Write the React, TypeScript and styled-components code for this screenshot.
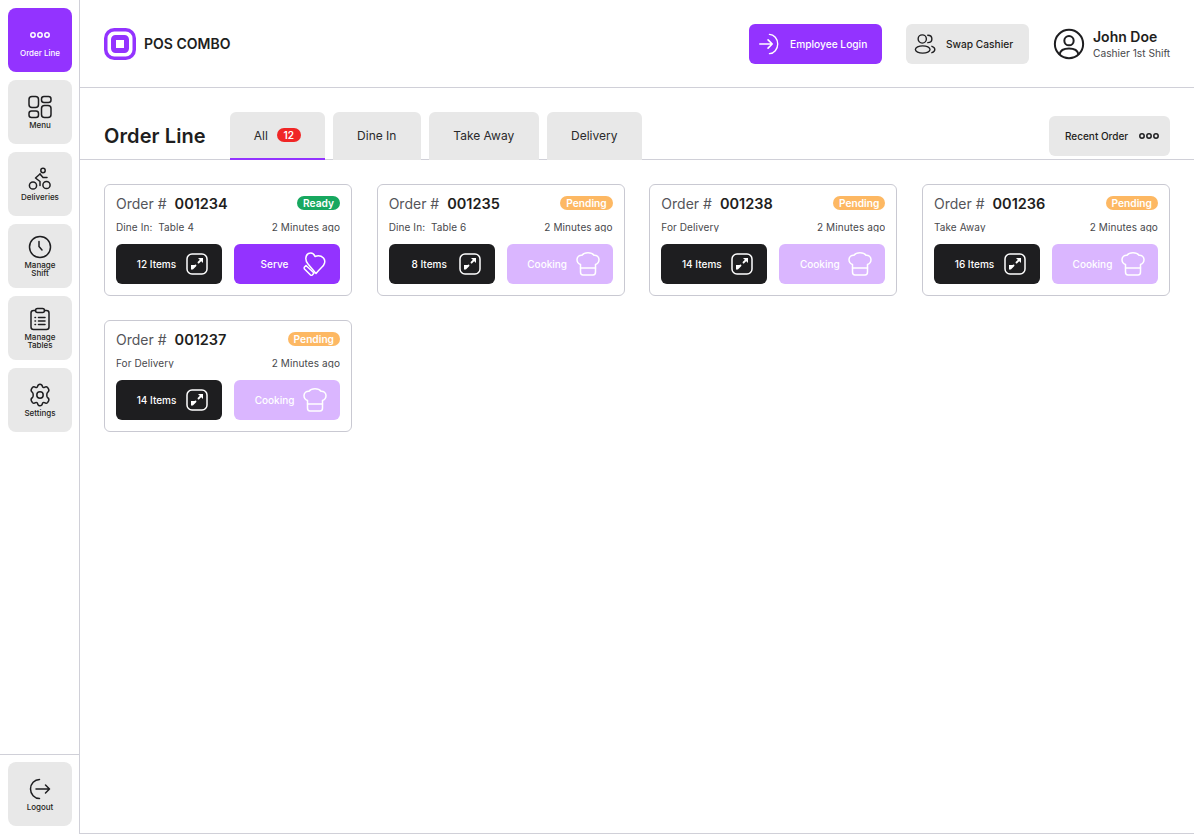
import React from "react";
import styled, { createGlobalStyle } from "styled-components";

const purple = "#9333ff";
const ink = "#1e1e20";

const GlobalStyle = createGlobalStyle`
  html, body {
    margin: 0;
    padding: 0;
    background: #fff;
    font-family: Inter, "Liberation Sans", sans-serif;
    color: ${ink};
  }
  * { box-sizing: border-box; }
`;

type IconProps = { size?: number };

const Svg = ({ size = 24, children }: IconProps & { children: React.ReactNode }) => (
  <svg width={size} height={size} viewBox="0 0 24 24" fill="none" stroke="currentColor" strokeWidth="1.5" strokeLinecap="round" strokeLinejoin="round">
    {children}
  </svg>
);

const DotsIcon = () => (
  <svg width="20" height="6" viewBox="0 0 20 6" fill="none" stroke="currentColor" strokeWidth="1.5">
    <circle cx="3" cy="3" r="2.2" />
    <circle cx="10" cy="3" r="2.2" />
    <circle cx="17" cy="3" r="2.2" />
  </svg>
);

const MenuIcon = () => (
  <Svg>
    <rect x="1" y="1.5" width="9.5" height="11" rx="3" />
    <rect x="13.5" y="1.5" width="9.5" height="6" rx="2.5" />
    <rect x="1" y="16" width="9.5" height="6.5" rx="2.5" />
    <rect x="13.5" y="10.5" width="9.5" height="12" rx="3" />
  </Svg>
);

const BikeIcon = () => (
  <Svg>
    <circle cx="15" cy="3.5" r="2.2" />
    <circle cx="5" cy="18.5" r="3.6" />
    <circle cx="18.5" cy="18" r="3.6" />
    <path d="M12 7L7.5 11L12 14.5V18.5" />
    <path d="M12 7L15 10.5H19" />
  </Svg>
);

const ClockIcon = () => (
  <Svg>
    <circle cx="12" cy="12" r="10.5" />
    <path d="M11 6.5V11.5L14 15" />
  </Svg>
);

const ClipboardIcon = () => (
  <Svg>
    <path d="M7.5 3.5H5.5C4 3.5 3 4.5 3 6V20C3 21.5 4 22.5 5.5 22.5H18.5C20 22.5 21 21.5 21 20V6C21 4.5 20 3.5 18.5 3.5H16.5" />
    <rect x="7.5" y="1.5" width="9" height="4" rx="2" />
    <path d="M7 10.5H7.5M7 14H7.5M7 17.5H7.5M10.5 10.5H17M10.5 14H17M10.5 17.5H17" />
  </Svg>
);

const GearIcon = () => (
  <Svg>
    <circle cx="12" cy="12" r="3.2" />
    <path d="M9.6 3.4C9.9 1.9 10.8 1.2 12 1.2C13.2 1.2 14.1 1.9 14.4 3.4C14.6 4.3 15.6 4.8 16.4 4.3C17.7 3.5 18.9 3.6 19.7 4.6L20.6 6.2C21.2 7.4 20.8 8.5 19.6 9.3C18.8 9.8 18.8 10.9 18.8 12C18.8 13.1 18.8 14.2 19.6 14.7C20.8 15.5 21.2 16.6 20.6 17.8L19.7 19.4C18.9 20.4 17.7 20.5 16.4 19.7C15.6 19.2 14.6 19.7 14.4 20.6C14.1 22.1 13.2 22.8 12 22.8C10.8 22.8 9.9 22.1 9.6 20.6C9.4 19.7 8.4 19.2 7.6 19.7C6.3 20.5 5.1 20.4 4.3 19.4L3.4 17.8C2.8 16.6 3.2 15.5 4.4 14.7C5.2 14.2 5.2 13.1 5.2 12C5.2 10.9 5.2 9.8 4.4 9.3C3.2 8.5 2.8 7.4 3.4 6.2L4.3 4.6C5.1 3.6 6.3 3.5 7.6 4.3C8.4 4.8 9.4 4.3 9.6 3.4Z" />
  </Svg>
);

const LogoutIcon = () => (
  <Svg>
    <path d="M11.5 2.5C6.5 2.5 2.5 6.7 2.5 12C2.5 17.3 6.5 21.5 11.5 21.5" />
    <path d="M8 12H21.5M17.5 8L21.5 12L17.5 16" />
  </Svg>
);

const LoginIcon = () => (
  <Svg size={22}>
    <path d="M12.5 1.5C17.5 1.5 21.5 6.2 21.5 12C21.5 17.8 17.5 22.5 12.5 22.5" />
    <path d="M2 12H15.5M11 7.5L15.5 12L11 16.5" strokeWidth="1.8" />
  </Svg>
);

const SwapIcon = () => (
  <Svg size={22}>
    <circle cx="9" cy="6.5" r="4.5" />
    <path d="M15 2.5C18 2.5 19.5 4.5 19.5 6.5C19.5 8.5 18 10.5 15 10.5" />
    <ellipse cx="9.5" cy="18" rx="8" ry="4" />
    <path d="M19.5 14.5C21.5 15.2 22.7 16.6 22.7 18C22.7 19.4 21.5 20.8 19.5 21.5" />
  </Svg>
);

const UserIcon = () => (
  <Svg size={32}>
    <circle cx="12" cy="12" r="10.6" />
    <circle cx="12" cy="9.5" r="3.5" />
    <path d="M5 19.5C5.5 16.8 8 15.3 12 15.3C16 15.3 18.5 16.8 19 19.5" />
  </Svg>
);

const ExpandIcon = () => (
  <Svg>
    <rect x="2" y="2" width="20" height="20" rx="5" />
    <path d="M13.5 10.5L16.5 7.5M10.5 13.5L7.5 16.5" strokeWidth="1.8" />
    <path d="M13 6H18V11Z" fill="currentColor" stroke="none" />
    <path d="M6 13H11L6 18Z" fill="currentColor" stroke="none" />
  </Svg>
);

const ServeIcon = () => (
  <Svg>
    <path d="M5 12C2 8.5 2 3.5 5.5 1.5C8.5 0.5 11 2 12 4.5C14.5 3.5 18 3.5 20.5 6C23 9 21.5 13 18.5 15.5C17 17 15 19 13 21.5L5 12Z" />
    <path d="M3 13.5L1.5 15C1 15.7 1 16.3 1.5 17L7.5 23C8 23.5 8.8 23.5 9.3 23L11 21L3 13.5Z" />
  </Svg>
);

const ChefIcon = () => (
  <Svg>
    <path d="M4.5 16V12.5C2.5 11.8 1 10 1 7.5C1 4.8 3.3 3 6 3.2C7.3 1.5 9.5 0.8 12 0.8C14.5 0.8 16.7 1.5 18 3.2C20.7 3 23 4.8 23 7.5C23 10 21.5 11.8 19.5 12.5V16" />
    <path d="M4.5 16H19.5V20C19.5 21.7 18.5 23 17 23H7C5.5 23 4.5 21.7 4.5 20V16Z" />
  </Svg>
);

const Logo = () => (
  <svg width="32" height="32" viewBox="0 0 32 32" fill="none">
    <rect x="1.75" y="1.75" width="28.5" height="28.5" rx="8.5" stroke={purple} strokeWidth="3.5" />
    <rect x="9.5" y="9.5" width="13" height="13" rx="2" stroke={purple} strokeWidth="5" />
  </svg>
);

const Page = styled.div`
  display: flex;
  width: 1194px;
  height: 834px;
  overflow: hidden;
`;

const Sidebar = styled.nav`
  width: 80px;
  flex: none;
  display: flex;
  flex-direction: column;
  justify-content: space-between;
  border-right: 1px solid #d0d0d8;
`;

const SideList = styled.div`
  display: flex;
  flex-direction: column;
  gap: 8px;
  padding: 8px;
`;

const SideFoot = styled.div`
  padding: 7px 8px 8px;
  margin-right: -1px;
  border-top: 1px solid #d0d0d8;
`;

const SideItem = styled.button<{ $active?: boolean }>`
  width: 64px;
  height: 64px;
  padding: ${(p) => (p.$active ? "9px 0 0" : "0 0 1px")};
  border: none;
  border-radius: 8px;
  display: flex;
  flex-direction: column;
  align-items: center;
  justify-content: center;
  gap: ${(p) => (p.$active ? "11px" : "2px")};
  background: ${(p) => (p.$active ? purple : "#e8e8e8")};
  color: ${(p) => (p.$active ? "#fff" : ink)};
  font-family: inherit;
`;

const SideLabel = styled.span`
  max-width: 44px;
  font-size: 8px;
  line-height: 8px;
  font-weight: 500;
  text-align: center;
`;

const Main = styled.div`
  flex: 1;
  min-width: 0;
  display: flex;
  flex-direction: column;
  border-bottom: 1px solid #d0d0d8;
`;

const Header = styled.header`
  height: 88px;
  flex: none;
  display: flex;
  align-items: center;
  padding: 0 24px;
  border-bottom: 1px solid #d0d0d8;
`;

const Brand = styled.div`
  display: flex;
  align-items: center;
  gap: 8px;
  margin-right: auto;
  font-size: 14px;
  font-weight: 600;
`;

const HeaderButton = styled.button<{ $primary?: boolean }>`
  height: 40px;
  width: ${(p) => (p.$primary ? "133px" : "123px")};
  margin-right: 24px;
  padding: 0 0 0 ${(p) => (p.$primary ? "9px" : "8px")};
  border: none;
  border-radius: 6px;
  display: flex;
  align-items: center;
  gap: 10px;
  background: ${(p) => (p.$primary ? purple : "#e8e8e8")};
  color: ${(p) => (p.$primary ? "#fff" : ink)};
  font-family: inherit;
  font-size: 10.2px;
  font-weight: 500;
`;

const Profile = styled.div`
  display: flex;
  align-items: center;
  gap: 8px;
`;

const ProfileText = styled.div`
  width: 77px;
  display: flex;
  flex-direction: column;
  gap: 2px;
`;

const ProfileName = styled.span`
  font-size: 14px;
  line-height: 16px;
  font-weight: 600;
`;

const ProfileRole = styled.span`
  font-size: 10.2px;
  line-height: 12px;
  white-space: nowrap;
  color: #48484c;
`;

const TabBar = styled.div`
  height: 72px;
  flex: none;
  display: flex;
  align-items: flex-end;
  padding: 0 24px;
  border-bottom: 1px solid #d0d0d8;
`;

const PageTitle = styled.h1`
  margin: 0 24px 0 0;
  align-self: flex-end;
  font-size: 20px;
  line-height: 24px;
  font-weight: 600;
  letter-spacing: 0.1px;
  padding-bottom: 11px;
`;

const Tabs = styled.div`
  display: flex;
  gap: 8px;
  margin-right: auto;
  margin-bottom: -1px;
`;

const Tab = styled.div<{ $active?: boolean; $width: number }>`
  width: ${(p) => p.$width}px;
  height: 48px;
  display: flex;
  align-items: center;
  justify-content: center;
  gap: 9px;
  background: #e8e8e8;
  border-radius: 6px 6px 0 0;
  border-bottom: 2px solid ${(p) => (p.$active ? purple : "transparent")};
  font-size: 12px;
  color: #2a2a2c;
`;

const TabCount = styled.span`
  width: 24px;
  height: 14px;
  border-radius: 7px;
  background: #f02626;
  color: #fff;
  font-size: 10px;
  line-height: 14px;
  font-weight: 600;
  text-align: center;
`;

const RecentButton = styled.button`
  width: 121px;
  height: 40px;
  margin-bottom: 3px;
  padding: 0 0 0 16px;
  border: none;
  border-radius: 6px;
  display: flex;
  align-items: center;
  gap: 11px;
  background: #e8e8e8;
  color: ${ink};
  font-family: inherit;
  font-size: 10px;
  font-weight: 500;
`;

const OrderGrid = styled.div`
  display: grid;
  grid-template-columns: repeat(4, 248px);
  justify-content: space-between;
  row-gap: 24px;
  padding: 24px;
`;

const Card = styled.article`
  height: 112px;
  padding: 10px 11px 11px;
  border: 1px solid #c9c9d2;
  border-radius: 6px;
  display: flex;
  flex-direction: column;
`;

const CardTop = styled.div`
  height: 18px;
  display: flex;
  align-items: flex-start;
  justify-content: space-between;
`;

const OrderNo = styled.div`
  display: flex;
  gap: 8px;
  font-size: 14px;
  line-height: 18px;
  color: #55555a;
`;

const OrderCode = styled.strong`
  font-size: 14.5px;
  font-weight: 600;
  color: ${ink};
`;

const Status = styled.span<{ $ready?: boolean }>`
  height: 14px;
  margin-top: 1px;
  padding: 0 6px;
  border-radius: 7px;
  overflow: hidden;
  background: ${(p) => (p.$ready ? "#17a85f" : "#fdb863")};
  color: #fff;
  font-size: 10.2px;
  line-height: 15px;
  font-weight: 600;
`;

const CardMeta = styled.div`
  height: 11px;
  margin-top: 8px;
  overflow: hidden;
  display: flex;
  justify-content: space-between;
  font-size: 10px;
  line-height: 12px;
  letter-spacing: 0.1px;
  color: #48484c;
`;

const Table = styled.span`
  white-space: pre;
`;

const CardActions = styled.div`
  margin-top: auto;
  display: grid;
  grid-template-columns: repeat(2, minmax(0, 1fr));
  gap: 12px;
`;

const ActionButton = styled.button<{ $tone: "dark" | "serve" | "cooking" }>`
  height: 40px;
  padding: 0 13px 0 12px;
  border: none;
  border-radius: 6px;
  display: flex;
  align-items: center;
  justify-content: space-between;
  background: ${(p) => (p.$tone === "dark" ? ink : p.$tone === "serve" ? purple : "#dab6ff")};
  color: #fff;
  font-family: inherit;
  font-size: 10px;
  font-weight: 500;
`;

const ActionLabel = styled.span`
  width: 57px;
  text-align: center;
`;

const sideItems = [
  { label: "Menu", icon: <MenuIcon /> },
  { label: "Deliveries", icon: <BikeIcon /> },
  { label: "Manage Shift", icon: <ClockIcon /> },
  { label: "Manage Tables", icon: <ClipboardIcon /> },
  { label: "Settings", icon: <GearIcon /> },
];

const tabs = [
  { label: "All", width: 95, count: 12, active: true },
  { label: "Dine In", width: 88 },
  { label: "Take Away", width: 110 },
  { label: "Delivery", width: 95 },
];

const orders = [
  { code: "001234", meta: "Dine In:  Table 4", items: 12, ready: true },
  { code: "001235", meta: "Dine In:  Table 6", items: 8 },
  { code: "001238", meta: "For Delivery", items: 14 },
  { code: "001236", meta: "Take Away", items: 16 },
  { code: "001237", meta: "For Delivery", items: 14 },
];

export default function App() {
  return (
    <Page>
      <GlobalStyle />
      <Sidebar>
        <SideList>
          <SideItem $active>
            <DotsIcon />
            <SideLabel>Order Line</SideLabel>
          </SideItem>
          {sideItems.map((item) => (
            <SideItem key={item.label}>
              {item.icon}
              <SideLabel>{item.label}</SideLabel>
            </SideItem>
          ))}
        </SideList>
        <SideFoot>
          <SideItem>
            <LogoutIcon />
            <SideLabel>Logout</SideLabel>
          </SideItem>
        </SideFoot>
      </Sidebar>
      <Main>
        <Header>
          <Brand>
            <Logo />
            POS COMBO
          </Brand>
          <HeaderButton $primary>
            <LoginIcon />
            Employee Login
          </HeaderButton>
          <HeaderButton>
            <SwapIcon />
            Swap Cashier
          </HeaderButton>
          <Profile>
            <UserIcon />
            <ProfileText>
              <ProfileName>John Doe</ProfileName>
              <ProfileRole>Cashier 1st Shift</ProfileRole>
            </ProfileText>
          </Profile>
        </Header>
        <TabBar>
          <PageTitle>Order Line</PageTitle>
          <Tabs>
            {tabs.map((tab) => (
              <Tab key={tab.label} $active={tab.active} $width={tab.width}>
                {tab.label}
                {tab.count && <TabCount>{tab.count}</TabCount>}
              </Tab>
            ))}
          </Tabs>
          <RecentButton>
            Recent Order
            <DotsIcon />
          </RecentButton>
        </TabBar>
        <OrderGrid>
          {orders.map((order) => (
            <Card key={order.code}>
              <CardTop>
                <OrderNo>
                  Order #<OrderCode>{order.code}</OrderCode>
                </OrderNo>
                <Status $ready={order.ready}>{order.ready ? "Ready" : "Pending"}</Status>
              </CardTop>
              <CardMeta>
                <Table>{order.meta}</Table>
                <span>2 Minutes ago</span>
              </CardMeta>
              <CardActions>
                <ActionButton $tone="dark">
                  <ActionLabel>{order.items} Items</ActionLabel>
                  <ExpandIcon />
                </ActionButton>
                {order.ready ? (
                  <ActionButton $tone="serve">
                    <ActionLabel>Serve</ActionLabel>
                    <ServeIcon />
                  </ActionButton>
                ) : (
                  <ActionButton $tone="cooking">
                    <ActionLabel>Cooking</ActionLabel>
                    <ChefIcon />
                  </ActionButton>
                )}
              </CardActions>
            </Card>
          ))}
        </OrderGrid>
      </Main>
    </Page>
  );
}
